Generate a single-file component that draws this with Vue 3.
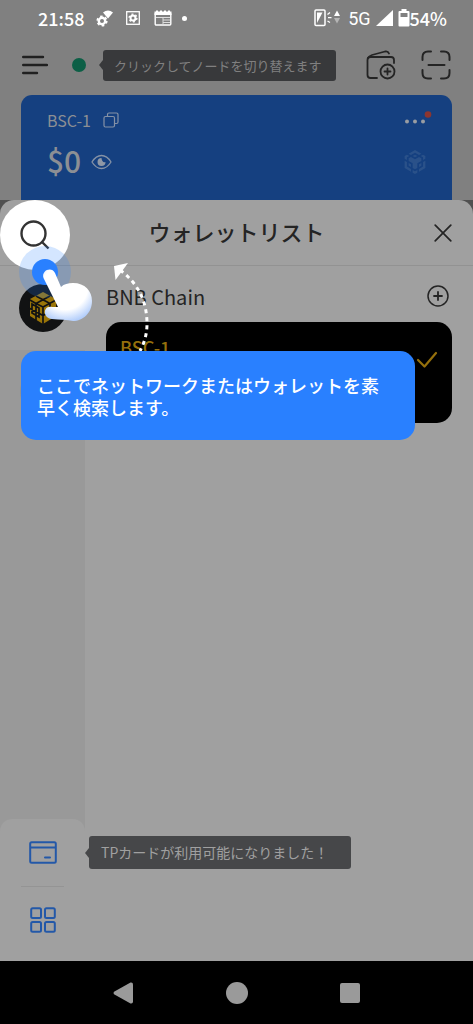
<script setup>
const bnbPath =
  'M5.631 3.676 12.001 0l6.367 3.676-2.34 1.358L12 2.716 7.972 5.034l-2.34-1.358Zm12.737 4.636-2.34-1.358L12 9.272 7.972 6.954l-2.34 1.358v2.716l4.026 2.318v4.636L12 19.341l2.341-1.359v-4.636l4.027-2.318V8.312Zm0 7.352v-2.716l-2.34 1.358v2.716l2.34-1.358Zm1.663.96-4.027 2.318v2.717l6.368-3.677V10.63l-2.34 1.358v4.636Zm-2.34-10.63 2.34 1.358v2.716l2.341-1.358V5.994l-2.34-1.358-2.342 1.358ZM9.657 19.926v2.716L12 24l2.341-1.358v-2.716l-2.34 1.358-2.343-1.358Zm-4.027-4.262 2.341 1.358v-2.716l-2.34-1.358v2.716Zm4.027-9.67L12 7.352l2.341-1.358L12 4.636 9.658 5.994Zm-5.69 1.358 2.34-1.358-2.34-1.358L1.627 5.994v2.716l2.341 1.358V7.352Zm0 4.636L1.627 10.63v7.352l6.368 3.677v-2.717l-4.027-2.318v-4.636Z'
</script>

<template>
  <div class="screen">
    <div class="status">
      <span class="clock">21:58</span>
      <svg class="s-wifi" width="18" height="18" viewBox="0 0 18 18">
        <path d="M7 3.500Q12 -0.500 17 3.500L12 9.500Z" fill="#fff" />
        <circle cx="6" cy="12" r="3.200" fill="none" stroke="#fff" stroke-width="2.400" />
        <circle cx="6" cy="12" r="4.700" fill="none" stroke="#fff" stroke-width="1.800" stroke-dasharray="2.500 2.420" />
      </svg>
      <svg class="s-box" width="14" height="14" viewBox="0 0 14 14">
        <rect x="0.700" y="0.700" width="12.600" height="12.600" fill="none" stroke="#fff" stroke-width="1.300" />
        <circle cx="7" cy="7" r="2.500" fill="none" stroke="#fff" stroke-width="2" />
        <circle cx="7" cy="7" r="3.900" fill="none" stroke="#fff" stroke-width="1.400" stroke-dasharray="2 2.080" />
      </svg>
      <svg class="s-news" width="18" height="16" viewBox="0 0 18 16">
        <path d="M0.500 1.500H2V0.500H4V1.500H6V0.500H8V1.500H10V0.500H12V1.500H14V0.500H16V1.500H17.500V5H0.500Z" fill="#fff" />
        <rect x="1.200" y="3" width="15.600" height="12" rx="1" fill="none" stroke="#fff" stroke-width="1.400" />
        <path d="M2 7.500H16M9 7.500V15M9 10H16M9 12.500H16" stroke="#ddd" stroke-width="1" />
      </svg>
      <span class="s-dot"></span>
      <span class="grow"></span>
      <svg class="s-nfc" width="28" height="18" viewBox="0 0 28 18">
        <rect x="1" y="1" width="10" height="15.500" rx="1" fill="none" stroke="#fff" stroke-width="1.500" />
        <path d="M3 3.500H8.500L3 14Z" fill="#fff" />
        <path d="M13.500 5.500L16 3.500M14 8.700H17.500M13.500 12L16 13.500" stroke="#fff" stroke-width="1.300" />
        <path d="M20 7L23 1.500L26 7Z" fill="#fff" />
        <path d="M20 9L23 14.500L26 9Z" fill="#b5b5b5" />
      </svg>
      <span class="net">5G</span>
      <svg class="s-sig" width="17" height="16" viewBox="0 0 17 16"><path d="M0 16L17 0V16Z" fill="#fff" /></svg>
      <svg class="s-bat" width="12" height="18" viewBox="0 0 12 18">
        <path d="M3.500 0H8.500V2H10.500Q11.500 2 11.500 3V16.500Q11.500 17.500 10.500 17.500H1.500Q0.500 17.500 0.500 16.500V3Q0.500 2 1.500 2H3.500ZM2.500 4V8H9.500V4Z" fill="#fff" fill-rule="evenodd" />
      </svg>
      <span class="pct">54%</span>
    </div>

    <header class="top">
      <button class="icon-btn menu" aria-label="メニュー">
        <svg width="26" height="20" viewBox="0 0 26 20"><path d="M1.200 2H21M1.200 10H25M1.200 18H15" stroke="#202020" stroke-width="2.400" stroke-linecap="round" /></svg>
      </button>
      <span class="node"></span>
      <span class="tip tip-top">クリックしてノードを切り替えます</span>
      <span class="grow"></span>
      <button class="icon-btn wallet" aria-label="ウォレットを追加">
        <svg width="30" height="30" viewBox="0 0 30 30" fill="none" stroke="#242424" stroke-width="1.800" stroke-linecap="round" stroke-linejoin="round">
          <path d="M11 28H4.500Q1.500 28 1.500 25V10Q1.500 7 4.500 7H25Q28 7 28 10V13" />
          <path d="M2 8Q3 6 6 5L19 1.500Q22 0.800 23 3.500" />
          <circle cx="21.500" cy="21.500" r="7" />
          <path d="M21.500 18.500V24.500M18.500 21.500H24.500" />
        </svg>
      </button>
      <button class="icon-btn" aria-label="スキャン">
        <svg width="30" height="30" viewBox="0 0 30 30" fill="none" stroke="#242424" stroke-width="2" stroke-linecap="round">
          <path d="M1.500 10V7Q1.500 1.500 7 1.500H10M20 1.500H23Q28.500 1.500 28.500 7V10M28.500 20V23Q28.500 28.500 23 28.500H20M10 28.500H7Q1.500 28.500 1.500 23V20M7.500 15H23.500" />
        </svg>
      </button>
    </header>

    <section class="card">
      <div class="row name">
        <span>BSC-1</span>
        <button class="icon-btn" aria-label="コピー">
          <svg width="16" height="16" viewBox="0 0 16 16" fill="none" stroke="#8592a6" stroke-width="1.200">
            <rect x="1" y="4.500" width="10.500" height="10.500" rx="1.500" /><path d="M4.500 4.500V2.500Q4.500 1 6 1H13.500Q15 1 15 2.500V10Q15 11.500 13.500 11.500H11.500" />
          </svg>
        </button>
        <span class="grow"></span>
        <button class="icon-btn more" aria-label="その他">
          <svg width="28" height="18" viewBox="0 0 28 18"><g fill="#999da2"><circle cx="3" cy="10.500" r="2" /><circle cx="11" cy="10.500" r="2" /><circle cx="19" cy="10.500" r="2" /></g><circle cx="24" cy="3.500" r="3.300" fill="#8c352f" /></svg>
        </button>
      </div>
      <div class="row amount">
        <span class="value">$0</span>
        <button class="icon-btn" aria-label="残高を隠す">
          <svg width="21" height="16" viewBox="0 0 21 16"><path d="M1 8Q5 1.500 10.500 1.500T20 8Q16 14.500 10.500 14.500T1 8Z" fill="none" stroke="#8592a6" stroke-width="1.300" /><path d="M10.500 4A4 4 0 1 0 14.500 8Q11 9 10.500 4Z" fill="#8f98a6" /></svg>
        </button>
        <span class="grow"></span>
        <svg class="chain" width="24" height="24" viewBox="0 0 24 24"><path :d="bnbPath" fill="#2a5189" /></svg>
      </div>
    </section>

    <div class="sheet-wrap">
      <section class="sheet">
        <div class="sheet-head">
          <h1>ウォレットリスト</h1>
          <button class="icon-btn" aria-label="閉じる">
            <svg width="18" height="18" viewBox="0 0 18 18"><path d="M1.200 1.200L16.800 16.800M16.800 1.200L1.200 16.800" stroke="#242424" stroke-width="1.700" stroke-linecap="round" /></svg>
          </button>
        </div>
        <div class="body">
          <nav class="side">
            <button class="active" aria-label="BNB Chain">
              <svg width="48" height="48" viewBox="0 0 48 48">
                <circle cx="24" cy="24" r="24" fill="#111213" />
                <path d="M24 8L37 15V32L24 40L11 32V15Z" fill="#9a7508" />
                <path d="M10 15.500L17 19.500V36.500M17 19.500L31 12M17 12L31 19.500V28M38 15.500L24 23V40M10 24L24 31.500L38 24M13 20V29L20 33V24ZM24 23L17 19.500" fill="none" stroke="#111213" stroke-width="1.700" />
              </svg>
            </button>
            <button class="other" aria-label="ネットワーク"><span></span></button>
            <div class="side-foot">
              <button aria-label="カード">
                <svg width="28" height="23" viewBox="0 0 28 23" fill="none" stroke="#2358a8" stroke-width="2" stroke-linecap="round"><rect x="1.200" y="1.200" width="25.600" height="20.600" rx="1.500" /><path d="M2 6.500H26M16 16.500H21" /></svg>
              </button>
              <button aria-label="すべて">
                <svg width="26" height="26" viewBox="0 0 26 26" fill="none" stroke="#2358a8" stroke-width="2"><rect x="1.200" y="1.200" width="9.800" height="9.800" rx="1.500" /><rect x="15" y="1.200" width="9.800" height="9.800" rx="1.500" /><rect x="1.200" y="15" width="9.800" height="9.800" rx="1.500" /><rect x="15" y="15" width="9.800" height="9.800" rx="1.500" /></svg>
              </button>
            </div>
          </nav>
          <main class="list">
            <div class="list-head">
              <h2>BNB Chain</h2>
              <button class="icon-btn" aria-label="追加">
                <svg width="22" height="22" viewBox="0 0 22 22" fill="none" stroke="#242424" stroke-width="1.500" stroke-linecap="round"><circle cx="11" cy="11" r="10" /><path d="M11 7V15M7 11H15" stroke-width="1.800" /></svg>
              </button>
            </div>
            <div class="wallet-card">
              <span>BSC-1</span>
              <svg width="22" height="18" viewBox="0 0 22 18"><path d="M2 9L8.500 15.500L20 2" fill="none" stroke="#95700c" stroke-width="2.200" stroke-linecap="round" stroke-linejoin="round" /></svg>
            </div>
            <span class="grow"></span>
            <span class="tip tip-card">TPカードが利用可能になりました！</span>
          </main>
        </div>
      </section>

      <button class="spot" aria-label="検索">
        <svg width="30" height="30" viewBox="0 0 30 30" fill="none" stroke="#333" stroke-width="2.400"><circle cx="13.500" cy="13.500" r="12" /><path d="M21.500 21.500L28.500 28.500" /></svg>
      </button>
      <svg class="arrow" width="44" height="90" viewBox="0 0 44 90">
        <path d="M8 7Q35 27 35 61Q35 75 28 88" fill="none" stroke="#fff" stroke-width="3" stroke-dasharray="4 4" />
        <path d="M2 3L16 0L3.500 17Z" fill="#fff" />
      </svg>
      <svg class="hand" width="76" height="80" viewBox="0 0 76 80">
        <defs>
          <radialGradient id="palm" gradientUnits="userSpaceOnUse" cx="46" cy="42" r="35"><stop offset="0.650" stop-color="#fff" /><stop offset="1" stop-color="#b3cefb" /></radialGradient>
        </defs>
        <circle cx="26" cy="27" r="26" fill="#2980ff" fill-opacity="0.200" />
        <circle cx="26" cy="27" r="13" fill="#2980ff" />
        <path d="M24.500 33C22 25 33 21 36 28L42 42C45 39 49 38 54 38C66 38 73 46 73 56C73 68 64 76 54 76C48 75 41 74.500 33 74C23 73 24 60 33 62L39 62Z" fill="url(#palm)" />
      </svg>
      <div class="coach" role="tooltip">ここでネットワークまたはウォレットを素早く検索します。</div>
    </div>

    <div class="navbar">
      <button aria-label="戻る"><svg width="20" height="22" viewBox="0 0 20 22"><path d="M1 9.800L17.500 0.500Q20 0 20 2.500V19.500Q20 22 17.500 21.500L1 12.200Q0 11 1 9.800Z" fill="#9a9a9a" /></svg></button>
      <button aria-label="ホーム"><svg width="22" height="22" viewBox="0 0 22 22"><circle cx="11" cy="11" r="11" fill="#9a9a9a" /></svg></button>
      <button aria-label="履歴"><svg width="20" height="20" viewBox="0 0 20 20"><rect width="20" height="20" rx="2" fill="#9a9a9a" /></svg></button>
    </div>
  </div>
</template>

<style>
body {
  margin: 0;
  background: #000;
}
</style>

<style scoped>
.screen {
  min-height: 100vh;
  display: flex;
  flex-direction: column;
  background: #808080;
  color: #242424;
  font-family: "Noto Sans CJK JP", "Noto Sans", sans-serif;
}
button {
  appearance: none;
  border: 0;
  padding: 0;
  background: none;
  display: flex;
  align-items: center;
  justify-content: center;
}
svg {
  display: block;
  flex: none;
}
h1, h2 {
  margin: 0;
  font-weight: 400;
}
.grow {
  flex: 1;
}
.status {
  height: 36px;
  padding: 0 26px 0 38px;
  display: flex;
  align-items: center;
  color: #fff;
  font-size: 18px;
  font-weight: 500;
}
.s-wifi {
  margin-left: 12px;
}
.s-box {
  margin-left: 12px;
}
.s-news {
  margin-left: 14px;
}
.s-dot {
  width: 5px;
  height: 5px;
  margin-left: 10px;
  border-radius: 50%;
  background: #fff;
}
.net {
  margin-left: 6px;
  font-family: Roboto, sans-serif;
  font-weight: 400;
}
.s-sig {
  margin-left: 5px;
}
.s-bat {
  margin-left: 5px;
}
.top {
  height: 58px;
  padding: 0 22px;
  display: flex;
  align-items: center;
}
.node {
  width: 14px;
  height: 14px;
  margin-left: 24px;
  border-radius: 50%;
  background: #0c5f46;
}
.tip {
  position: relative;
  border-radius: 3px;
  white-space: nowrap;
}
.tip::before {
  content: "";
  position: absolute;
  left: -4px;
  top: 50%;
  margin-top: -5px;
  border-top: 5px solid transparent;
  border-bottom: 5px solid transparent;
  border-right: 4px solid;
}
.tip-top {
  margin-left: 17px;
  padding: 0 14px 0 11px;
  line-height: 31px;
  font-size: 13px;
  background: #38393b;
  color: #808080;
}
.tip-top::before {
  border-right-color: #38393b;
}
.wallet {
  margin-right: 25px;
}
.card {
  height: 117px;
  margin: 1px 21px -12px;
  padding: 12px 20px 0 26px;
  box-sizing: border-box;
  border-radius: 11px;
  background: #154080;
  color: #8c8f94;
}
.row {
  display: flex;
  align-items: center;
}
.name {
  height: 26px;
  gap: 12px;
  font-size: 16px;
}
.amount {
  height: 58px;
  gap: 10px;
  font-size: 30px;
  font-weight: 500;
}
.value {
  padding-bottom: 4px;
}
.chain {
  margin-right: 5px;
}
.sheet-wrap {
  position: relative;
  flex: 1;
  display: flex;
  flex-direction: column;
}
.sheet-wrap::before {
  content: "";
  position: absolute;
  inset: 0 0 auto;
  height: 20px;
  background: #505050;
}
.sheet {
  position: relative;
  flex: 1;
  display: flex;
  flex-direction: column;
  overflow: hidden;
  border-radius: 14px 14px 0 0;
  background: #a0a0a0;
}
.sheet-head {
  height: 66px;
  box-sizing: border-box;
  padding: 0 21px 0 39px;
  display: flex;
  align-items: center;
  border-bottom: 1px solid #929292;
}
h1 {
  flex: 1;
  padding-bottom: 4px;
  text-align: center;
  font-size: 22px;
  font-weight: 500;
}
.body {
  flex: 1;
  display: flex;
}
.side {
  width: 85px;
  display: flex;
  flex-direction: column;
  background: #999;
}
.active {
  height: 84px;
  background: #a0a0a0;
}
.other {
  height: 84px;
}
.other span {
  width: 46px;
  height: 46px;
  border-radius: 50%;
  background: #919191;
}
.side-foot {
  margin-top: auto;
  padding: 0 21px 8px;
  border-radius: 12px 12px 0 0;
  background: #a0a0a0;
}
.side-foot button {
  width: 100%;
  height: 67px;
}
.side-foot button + button {
  border-top: 1px solid #949494;
}
.list {
  flex: 1;
  padding: 12px 21px 92px;
  display: flex;
  flex-direction: column;
}
.list-head {
  height: 36px;
  padding-right: 3px;
  display: flex;
  align-items: center;
  justify-content: space-between;
}
h2 {
  font-size: 20px;
}
.wallet-card {
  height: 101px;
  margin-top: 8px;
  padding: 12px 14px 0;
  box-sizing: border-box;
  border-radius: 15px;
  background: #000;
  color: #95700c;
  display: flex;
  justify-content: space-between;
  font-size: 18px;
  font-weight: 500;
}
.wallet-card svg {
  margin-top: 17px;
}
.tip-card {
  align-self: flex-start;
  margin-left: -17px;
  padding: 0 23px 0 12px;
  line-height: 33px;
  font-size: 14px;
  background: #464749;
  color: #a0a0a0;
}
.tip-card::before {
  border-right-color: #464749;
}
.spot {
  position: absolute;
  left: 0;
  top: 0;
  width: 70px;
  height: 70px;
  border-radius: 50%;
  background: #fff;
}
.hand {
  position: absolute;
  left: 19px;
  top: 45px;
}
.arrow {
  position: absolute;
  left: 112px;
  top: 63px;
}
.coach {
  position: absolute;
  left: 21px;
  right: 58px;
  top: 151px;
  padding: 23px 28px 22px 16px;
  border-radius: 15px;
  background: #2980ff;
  color: #fff;
  font-size: 18px;
  font-weight: 500;
  line-height: 22px;
}
.navbar {
  height: 63px;
  padding: 0 66px;
  display: flex;
  align-items: center;
  background: #000;
}
.navbar button {
  flex: 1;
  height: 48px;
}
</style>
